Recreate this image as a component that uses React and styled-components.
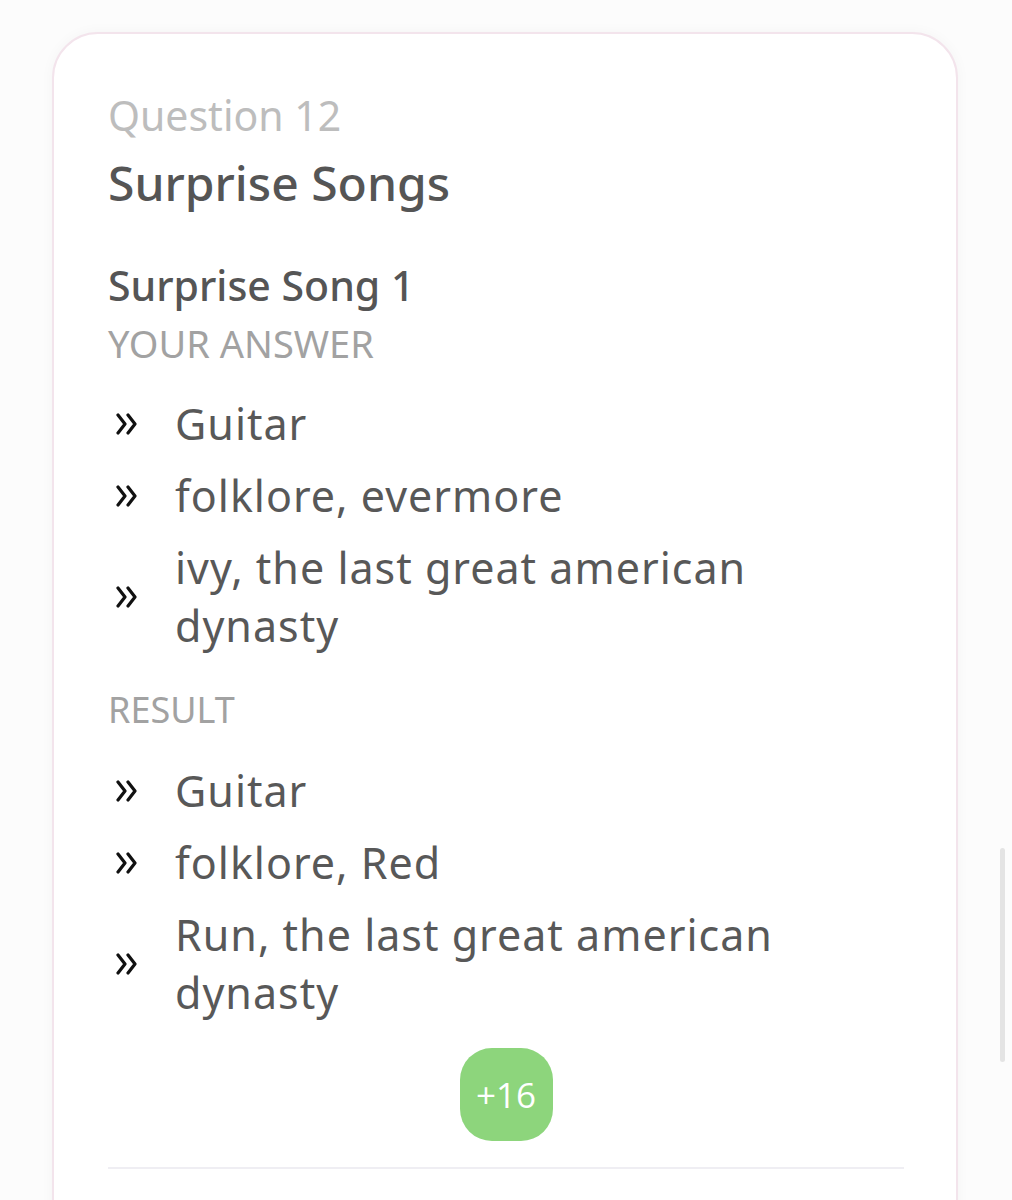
import React from 'react'
import styled, { createGlobalStyle } from 'styled-components'

const GlobalStyle = createGlobalStyle`
  body {
    margin: 0;
    background: #fcfcfc;
    font-family: "Noto Sans", "Open Sans", sans-serif;
  }
`

const Page = styled.div`
  padding: 32px 54px 0 52px;
`

const Card = styled.div`
  background: #fff;
  border: 2px solid #f3e4ec;
  border-radius: 46px;
  box-shadow: 0 0 14px rgba(0, 0, 0, 0.035);
  padding: 56px 52px 200px 54px;
`

const QuestionNumber = styled.div`
  font-size: 41px;
  line-height: 50px;
  color: #bdbdbd;
`

const QuestionTitle = styled.h2`
  margin: 13px 0 0;
  font-size: 48px;
  line-height: 60px;
  font-weight: 500;
  color: #555;
`

const SongTitle = styled.h3`
  margin: 47px 0 0;
  font-size: 41px;
  line-height: 50px;
  font-weight: 500;
  color: #555;
`

const Label = styled.div`
  margin-top: ${p => p.$top}px;
  font-size: ${p => p.$size}px;
  line-height: 46px;
  color: #a2a2a2;
  text-transform: uppercase;
`

const List = styled.ul`
  list-style: none;
  margin: 29px 0 0;
  padding: 0;
  display: flex;
  flex-direction: column;
  gap: 14px;
`

const Item = styled.li`
  display: flex;
  align-items: center;
  gap: 36px;
  padding-left: 7px;
`

const ItemText = styled.span`
  max-width: 640px;
  font-size: 43px;
  line-height: 58px;
  letter-spacing: 1px;
  color: #585858;
`

const Score = styled.div`
  margin: 26px auto 0;
  width: 93px;
  height: 93px;
  border-radius: 32px;
  background: #8dd57c;
  color: #fff;
  display: flex;
  align-items: center;
  justify-content: center;
  font-family: "Open Sans", "Noto Sans", sans-serif;
  font-size: 35px;
`

const Divider = styled.hr`
  margin: 26px 0 0;
  border: none;
  height: 2px;
  background: #efeef3;
`

const ScrollThumb = styled.div`
  position: fixed;
  top: 848px;
  right: 7px;
  width: 5px;
  height: 214px;
  border-radius: 3px;
  background: #e4e4e4;
`

function Chevrons() {
  return (
    <svg width="24" height="22" viewBox="0 0 24 22" fill="none" stroke="#111"
      strokeWidth="3.2" strokeLinecap="round" strokeLinejoin="round">
      <polyline points="3,2 10,11 3,20" />
      <polyline points="13,2 20,11 13,20" />
    </svg>
  )
}

const yourAnswer = ['Guitar', 'folklore, evermore', 'ivy, the last great american dynasty']
const result = ['Guitar', 'folklore, Red', 'Run, the last great american dynasty']

function AnswerList({ items }) {
  return (
    <List>
      {items.map((text, i) =>
        <Item key={i}>
          <Chevrons />
          <ItemText>{text}</ItemText>
        </Item>
      )}
    </List>
  )
}

export default function App() {
  return (
    <>
      <GlobalStyle />
      <Page>
        <Card>
          <QuestionNumber>Question 12</QuestionNumber>
          <QuestionTitle>Surprise Songs</QuestionTitle>
          <SongTitle>Surprise Song 1</SongTitle>
          <Label $top={10} $size={38}>Your answer</Label>
          <AnswerList items={yourAnswer} />
          <Label $top={32} $size={36}>Result</Label>
          <AnswerList items={result} />
          <Score>+16</Score>
          <Divider />
        </Card>
      </Page>
      <ScrollThumb />
    </>
  )
}
